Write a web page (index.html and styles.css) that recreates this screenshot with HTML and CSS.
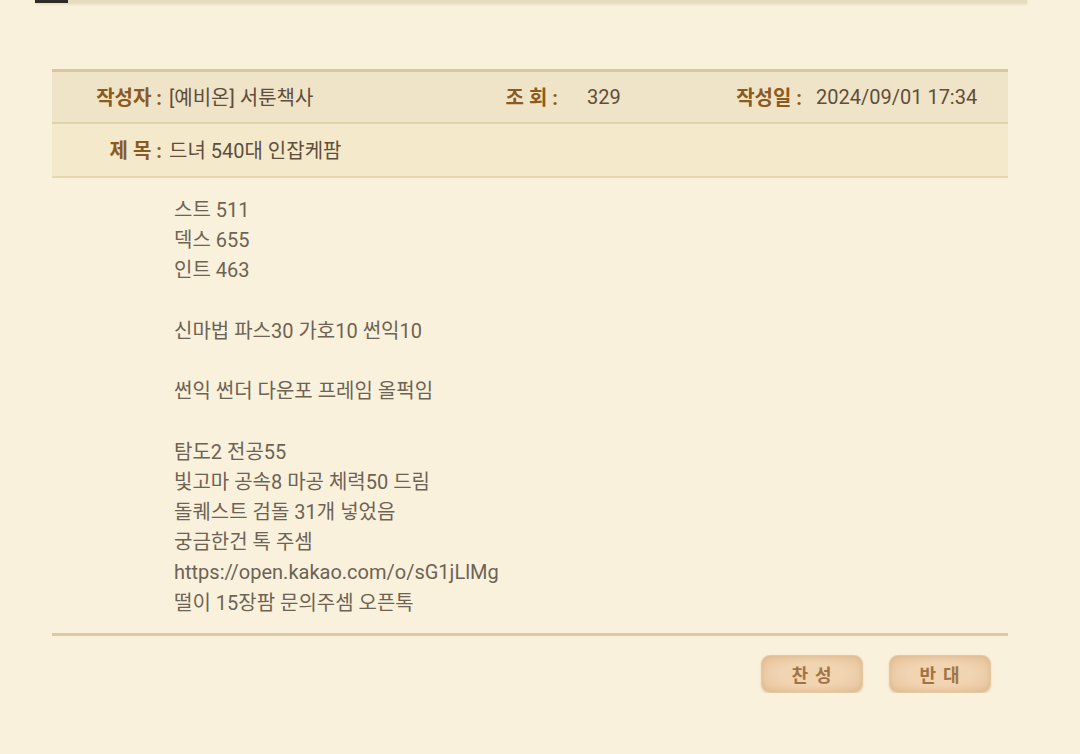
FILE: index.html
```html
<!DOCTYPE html>
<html lang="ko">
<head>
  <meta charset="UTF-8" />
  <meta name="viewport" content="width=device-width, initial-scale=1.0" />
  <title>드녀 540대 인잡케팜</title>
  <link rel="stylesheet" href="styles.css">
</head>
<body>
  <div class="topbar"><span class="thumb"></span></div>

  <div class="post">
    <div class="row row-info">
      <span class="label label-writer">작성자 :</span>
      <span class="value value-writer">[예비온] 서툰책사</span>
      <span class="label label-hit">조 회 :</span>
      <span class="value value-hit">329</span>
      <span class="label label-date">작성일 :</span>
      <span class="value value-date">2024/09/01 17:34</span>
    </div>
    <div class="row row-title">
      <span class="label label-writer">제 목 :</span>
      <span class="value value-writer">드녀 540대 인잡케팜</span>
    </div>

    <div class="content">
      스트 511<br>
      덱스 655<br>
      인트 463<br>
      <br>
      신마법 파스30 가호10 썬익10<br>
      <br>
      썬익 썬더 다운포 프레임 올퍽임<br>
      <br>
      탐도2 전공55<br>
      빛고마 공속8 마공 체력50 드림<br>
      돌퀘스트 검돌 31개 넣었음<br>
      궁금한건 톡 주셈<br>
      https://open.kakao.com/o/sG1jLlMg<br>
      떨이 15장팜 문의주셈 오픈톡
    </div>
  </div>

  <div class="actions">
    <button class="vote">찬 성</button>
    <button class="vote">반 대</button>
  </div>
</body>
</html>
```

FILE: styles.css
```css
body {
  margin: 0;
  background: #f9f1db;
  font-family: Roboto, "Noto Sans CJK KR", sans-serif;
  color: #5e4e3c;
}
.topbar {
  position: relative;
  height: 3px;
  margin: 0 53px 0 35px;
  background: #e6dcc0;
  box-shadow: 0 1px 3px rgba(170,150,110,0.3);
}
.thumb {
  position: absolute;
  left: 0;
  top: 0;
  width: 33px;
  height: 3px;
  background: #2e2a26;
}
.post {
  margin: 66px 72px 0 52px;
  border-bottom: 3px solid #dccba2;
}
.row {
  display: flex;
  align-items: center;
  font-size: 20px;
}
.row-info {
  height: 49px;
  padding-bottom: 1px;
  background: #efe4c7;
  border-top: 3px solid #d9c79f;
  border-bottom: 2px solid #e2d2ab;
}
.row-title {
  height: 50px;
  padding-bottom: 2px;
  background: #f5e9cb;
  border-bottom: 2px solid #e6d7b2;
}
.label {
  font-weight: bold;
  color: #8b5a22;
  text-align: right;
  white-space: nowrap;
}
.value {
  white-space: nowrap;
}
.label-writer { width: 110px; }
.value-writer { width: 282px; margin-left: 7px; }
.label-hit { width: 107px; }
.value-hit { width: 115px; margin-left: 29px; }
.label-date { width: 100px; }
.value-date { margin-left: 14px; }
.content {
  padding: 17px 0 15px 122px;
  font-size: 20px;
  line-height: 30.2px;
  color: #6d6355;
}
.actions {
  display: flex;
  justify-content: flex-end;
  gap: 26px;
  margin: 19px 89px 0 0;
}
.vote {
  width: 102px;
  height: 38px;
  border: 1px solid #e6c8a2;
  border-radius: 9px;
  background: radial-gradient(ellipse at center, #f1d4b1 45%, #e7c39b 100%);
  box-shadow: inset 0 0 6px rgba(190,140,90,0.3), 0 1px 2px rgba(170,130,90,0.3);
  font-family: "Noto Sans CJK KR", sans-serif;
  font-size: 18px;
  font-weight: bold;
  letter-spacing: 1px;
  color: #a27445;
  cursor: pointer;
}
```
